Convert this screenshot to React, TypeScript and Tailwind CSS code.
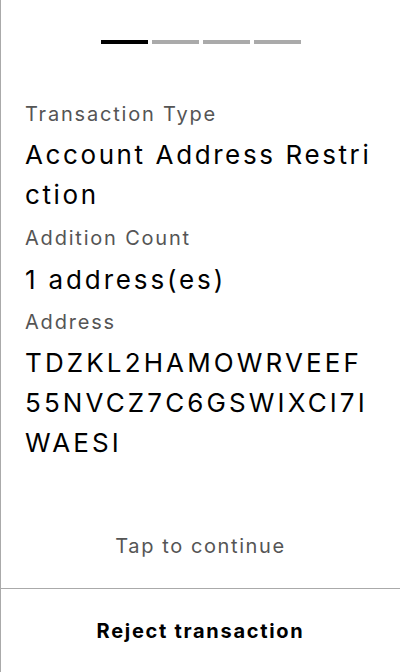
import React from "react";

export default function App() {
  return (
    <div
      className="w-[400px] h-[672px] bg-white border-l border-[#aaaaaa] flex flex-col overflow-hidden"
      style={{ fontFamily: "Inter, 'Noto Sans', sans-serif" }}
    >
      <div className="flex-1 flex flex-col">
        <div className="pt-[40px] flex justify-center gap-[4px]">
          <div className="w-[47px] h-[4px] bg-black" />
          <div className="w-[47px] h-[4px] bg-[#aaaaaa]" />
          <div className="w-[47px] h-[4px] bg-[#aaaaaa]" />
          <div className="w-[47px] h-[4px] bg-[#aaaaaa]" />
        </div>
        <div className="pl-[24px] pr-[22px] pt-[49px] flex flex-col">
          <div className="text-[20px] leading-[42px] tracking-[0.09em] text-[#555555]">Transaction Type</div>
          <div className="text-[26px] leading-[40px] tracking-[0.1em] text-black break-all">Account Address Restriction</div>
          <div className="mt-[2px] text-[20px] leading-[43px] tracking-[0.09em] text-[#555555]">Addition Count</div>
          <div className="text-[26px] leading-[40px] tracking-[0.11em] text-black break-all">1 address(es)</div>
          <div className="mt-[1px] text-[20px] leading-[42px] tracking-[0.09em] text-[#555555]">Address</div>
          <div className="text-[26px] leading-[40px] tracking-[0.12em] text-black break-all">TDZKL2HAMOWRVEEF55NVCZ7C6GSWIXCI7IWAESI</div>
        </div>
        <div className="flex-1" />
        <div className="text-center text-[20px] leading-[28px] tracking-[0.08em] text-[#555555] pb-[28px]">Tap to continue</div>
      </div>
      <div className="h-[84px] border-t border-[#aaaaaa] flex items-center justify-center">
        <span className="text-[20px] font-bold tracking-[0.085em] text-black">Reject transaction</span>
      </div>
    </div>
  );
}
